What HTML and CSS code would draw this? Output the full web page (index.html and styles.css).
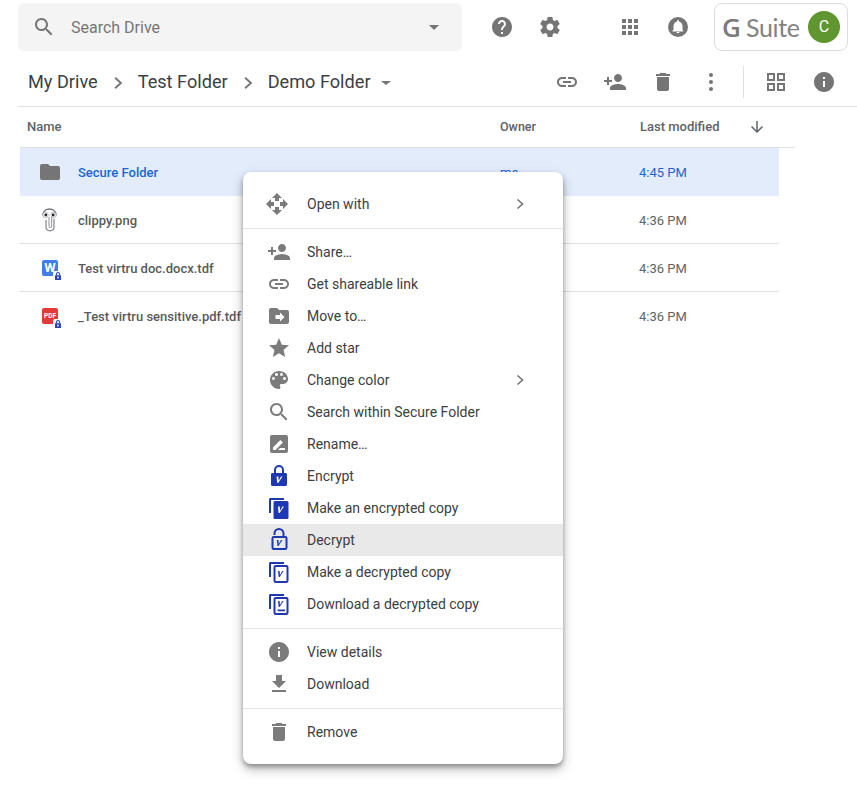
FILE: index.html
```html
<!DOCTYPE html>
<html lang="en">
<head>
<meta charset="utf-8">
<title>Drive</title>
<link rel="stylesheet" href="styles.css">
</head>
<body>
<svg class="defs" aria-hidden="true">
  <defs>
    <symbol id="i-search" viewBox="0 0 24 24"><path d="M15.5 14h-.79l-.28-.27C15.41 12.59 16 11.11 16 9.5 16 5.91 13.09 3 9.5 3S3 5.91 3 9.5 5.91 16 9.5 16c1.61 0 3.09-.59 4.23-1.57l.27.28v.79l5 4.99L20.49 19l-4.99-5zm-6 0C7.01 14 5 11.99 5 9.5S7.01 5 9.5 5 14 7.01 14 9.5 11.99 14 9.5 14z"/></symbol>
    <symbol id="i-link" viewBox="0 0 24 24"><path d="M3.9 12c0-1.71 1.39-3.1 3.1-3.1h4V7H7c-2.76 0-5 2.24-5 5s2.24 5 5 5h4v-1.9H7c-1.71 0-3.1-1.39-3.1-3.1zM8 13h8v-2H8v2zm9-6h-4v1.9h4c1.71 0 3.1 1.39 3.1 3.1s-1.39 3.1-3.1 3.1h-4V17h4c2.76 0 5-2.24 5-5s-2.24-5-5-5z"/></symbol>
    <symbol id="i-person" viewBox="0 0 24 24"><path d="M15 12c2.21 0 4-1.79 4-4s-1.79-4-4-4-4 1.79-4 4 1.79 4 4 4zm-9-2V7H4v3H1v2h3v3h2v-3h3v-2H6zm9 4c-2.67 0-8 1.34-8 4v2h16v-2c0-2.66-5.33-4-8-4z"/></symbol>
    <symbol id="i-trash" viewBox="0 0 24 24"><path d="M6 19c0 1.1.9 2 2 2h8c1.1 0 2-.9 2-2V7H6v12zM19 4h-3.5l-1-1h-5l-1 1H5v2h14V4z"/></symbol>
    <symbol id="i-info" viewBox="0 0 24 24"><path d="M12 2C6.48 2 2 6.48 2 12s4.48 10 10 10 10-4.48 10-10S17.52 2 12 2zm1 15h-2v-6h2v6zm0-8h-2V7h2v2z"/></symbol>
    <symbol id="i-folder" viewBox="0 0 24 24"><path d="M10 4H4c-1.1 0-1.99.9-1.99 2L2 18c0 1.1.9 2 2 2h16c1.1 0 2-.9 2-2V8c0-1.1-.9-2-2-2h-8l-2-2z"/></symbol>
    <symbol id="i-chev" viewBox="0 0 12 12"><path d="M3.500 1.500 8.500 6l-5 4.500" fill="none" stroke="currentColor" stroke-width="1.600"/></symbol>
    <symbol id="i-copy" viewBox="0 0 24 24"><path d="M2 17V3.500C2 2.700 2.700 2 3.500 2H17v2H4v13z"/></symbol>
    <symbol id="i-lockbadge" viewBox="0 0 10 10"><rect class="badge-bg" width="10" height="10" rx="2"/><path d="M3.500 4.500V3a1.500 1.500 0 0 1 3 0v1.500" fill="none" stroke="#2b45c0" stroke-width="1.100"/><path d="M2 4.300h6v4.700H2zM4.200 5.800v1.500h1.600V5.800z" fill="#2b45c0" fill-rule="evenodd"/></symbol>
  </defs>
</svg>

<header class="topbar">
  <div class="search">
    <svg class="icon search-icon"><use href="#i-search"/></svg>
    <span class="search-text">Search Drive</span>
    <span class="caret search-caret"></span>
  </div>
  <div class="icon-btn"><svg class="icon" viewBox="0 0 24 24"><path d="M12 2C6.48 2 2 6.48 2 12s4.48 10 10 10 10-4.48 10-10S17.52 2 12 2zm1 17h-2v-2h2v2zm2.07-7.75l-.9.92C13.45 12.9 13 13.5 13 15h-2v-.5c0-1.1.45-2.1 1.17-2.83l1.24-1.26c.37-.36.59-.86.59-1.41 0-1.1-.9-2-2-2s-2 .9-2 2H8c0-2.21 1.79-4 4-4s4 1.79 4 4c0 .88-.36 1.68-.93 2.25z"/></svg></div>
  <div class="icon-btn gap-right"><svg class="icon" viewBox="0 0 24 24"><path d="M19.43 12.98c.04-.32.07-.64.07-.98s-.03-.66-.07-.98l2.11-1.65c.19-.15.24-.42.12-.64l-2-3.46c-.12-.22-.39-.3-.61-.22l-2.49 1c-.52-.4-1.08-.73-1.69-.98l-.38-2.65C14.46 2.18 14.25 2 14 2h-4c-.25 0-.46.18-.49.42l-.38 2.65c-.61.25-1.17.59-1.69.98l-2.49-1c-.23-.09-.49 0-.61.22l-2 3.46c-.13.22-.07.49.12.64l2.11 1.65c-.04.32-.07.65-.07.98s.03.66.07.98l-2.11 1.65c-.19.15-.24.42-.12.64l2 3.46c.12.22.39.3.61.22l2.49-1c.52.4 1.08.73 1.69.98l.38 2.65c.03.24.24.42.49.42h4c.25 0 .46-.18.49-.42l.38-2.65c.61-.25 1.17-.59 1.69-.98l2.49 1c.23.09.49 0 .61-.22l2-3.46c.12-.22.07-.49-.12-.64l-2.11-1.65zM12 15.5c-1.93 0-3.5-1.57-3.5-3.5s1.57-3.5 3.5-3.5 3.5 1.57 3.5 3.5-1.57 3.5-3.5 3.5z"/></svg></div>
  <div class="icon-btn"><svg class="icon" viewBox="0 0 24 24"><path d="M4 4h4v4H4zM10 4h4v4h-4zM16 4h4v4h-4zM4 10h4v4H4zM10 10h4v4h-4zM16 10h4v4h-4zM4 16h4v4H4zM10 16h4v4h-4zM16 16h4v4h-4z"/></svg></div>
  <div class="icon-btn"><svg class="icon" viewBox="0 0 24 24"><circle cx="12" cy="12" r="10"/><path class="white" d="M12 18.300c.8 0 1.400-.6 1.400-1.300h-2.800c0 .7.6 1.300 1.400 1.300zm4.500-3.500v-3.600c0-2.200-1.200-4-3.300-4.500v-.4c0-.6-.5-1.100-1.200-1.100s-1.200.5-1.200 1.100v.4c-2.100.5-3.300 2.300-3.300 4.500v3.600l-1.200 1.100v.5h11v-.5z"/></svg></div>
  <div class="gsuite">
    <span class="g-mark">G</span><span class="g-suite">Suite</span>
    <span class="avatar">C</span>
  </div>
</header>

<nav class="toolbar">
  <span class="crumb">My Drive</span>
  <svg class="crumb-sep"><use href="#i-chev"/></svg>
  <span class="crumb">Test Folder</span>
  <svg class="crumb-sep"><use href="#i-chev"/></svg>
  <span class="crumb">Demo Folder</span>
  <span class="caret crumb-caret"></span>
  <div class="actions">
    <div class="icon-btn"><svg class="icon"><use href="#i-link"/></svg></div>
    <div class="icon-btn"><svg class="icon"><use href="#i-person"/></svg></div>
    <div class="icon-btn"><svg class="icon"><use href="#i-trash"/></svg></div>
    <div class="icon-btn"><svg class="icon" viewBox="0 0 24 24"><circle cx="12" cy="5" r="2"/><circle cx="12" cy="12" r="2"/><circle cx="12" cy="19" r="2"/></svg></div>
    <span class="vline"></span>
    <div class="icon-btn"><svg class="icon" viewBox="0 0 24 24"><path fill-rule="evenodd" d="M3 3h8v8H3zM5 5v4h4V5zM13 3h8v8h-8zM15 5v4h4V5zM3 13h8v8H3zM5 15v4h4v-4zM13 13h8v8h-8zM15 15v4h4v-4z"/></svg></div>
    <div class="icon-btn"><svg class="icon"><use href="#i-info"/></svg></div>
  </div>
</nav>

<main class="list">
  <div class="list-head">
    <span class="col-name">Name</span>
    <span class="col-owner">Owner</span>
    <span class="col-mod">Last modified</span>
    <svg class="sort-arrow" viewBox="0 0 24 24"><path d="M20 12l-1.410-1.410L13 16.170V4h-2v12.170l-5.580-5.590L4 12l8 8 8-8z"/></svg>
  </div>

  <div class="row selected">
    <svg class="file-icon folder"><use href="#i-folder"/></svg>
    <span class="row-name">Secure Folder</span>
    <span class="row-owner">me</span>
    <span class="row-mod">4:45 PM</span>
  </div>
  <div class="row">
    <svg class="file-icon clippy" viewBox="0 0 24 26">
      <path d="M8 13v7c0 5 8 5 8 0V12" fill="none" stroke="#8f8f96" stroke-width="1.300"/>
      <path d="M11 10v9c0 2 2.600 2 2.600 0V9" fill="none" stroke="#a4a4aa" stroke-width="1.200"/>
      <path d="M5.500 9C4 6 6.500 2 11.500 2s7.500 4 6 7" fill="none" stroke="#77777d" stroke-width="1.300"/>
      <circle cx="7.500" cy="8" r="2.700" fill="#fff" stroke="#a8a8ae" stroke-width=".8"/>
      <circle cx="15.500" cy="8" r="2.700" fill="#fff" stroke="#a8a8ae" stroke-width=".8"/>
      <circle cx="7.800" cy="8" r="1.400" fill="#222"/>
      <circle cx="15.200" cy="8" r="1.400" fill="#222"/>
    </svg>
    <span class="row-name">clippy.png</span>
    <span class="row-owner"></span>
    <span class="row-mod">4:36 PM</span>
  </div>
  <div class="row">
    <span class="file-icon doc word">W<svg class="badge"><use href="#i-lockbadge"/></svg></span>
    <span class="row-name">Test virtru doc.docx.tdf</span>
    <span class="row-owner"></span>
    <span class="row-mod">4:36 PM</span>
  </div>
  <div class="row">
    <span class="file-icon doc pdf">PDF<svg class="badge"><use href="#i-lockbadge"/></svg></span>
    <span class="row-name">_Test virtru sensitive.pdf.tdf</span>
    <span class="row-owner"></span>
    <span class="row-mod">4:36 PM</span>
  </div>
</main>

<div class="menu">
  <div class="item"><svg class="micon nudge" viewBox="0 0 24 24"><path d="M10 9h4V6h3l-5-5-5 5h3v3zm-1 1H6V7l-5 5 5 5v-3h3v-4zm14 2l-5-5v3h-3v4h3v3l5-5zm-9 3h-4v3H7l5 5 5-5h-3v-3z"/></svg><span class="label">Open with</span><svg class="more"><use href="#i-chev"/></svg></div>
  <hr class="sep">
  <div class="item"><svg class="micon"><use href="#i-person"/></svg><span class="label">Share…</span></div>
  <div class="item"><svg class="micon"><use href="#i-link"/></svg><span class="label">Get shareable link</span></div>
  <div class="item"><svg class="micon" viewBox="0 0 24 24"><path d="M10 4H4c-1.100 0-1.990.9-1.990 2L2 18c0 1.100.9 2 2 2h16c1.100 0 2-.9 2-2V8c0-1.100-.9-2-2-2h-8l-2-2z"/><path class="white" d="M13 8.500l4.500 4.500-4.500 4.500V15H8.500v-4H13z"/></svg><span class="label">Move to…</span></div>
  <div class="item"><svg class="micon" viewBox="0 0 24 24"><path d="M12 17.270L18.180 21l-1.640-7.030L22 9.240l-7.190-.61L12 2 9.190 8.630 2 9.240l5.460 4.730L5.820 21z"/></svg><span class="label">Add star</span></div>
  <div class="item"><svg class="micon" viewBox="0 0 24 24"><path d="M12 3c-4.970 0-9 4.030-9 9s4.030 9 9 9c.83 0 1.500-.67 1.500-1.500 0-.39-.15-.74-.39-1.010-.23-.26-.38-.61-.38-.99 0-.83.67-1.500 1.500-1.500H16c2.760 0 5-2.240 5-5 0-4.420-4.030-8-9-8zm-5.500 9c-.83 0-1.500-.67-1.500-1.500S5.670 9 6.500 9 8 9.670 8 10.500 7.330 12 6.500 12zm3-4C8.670 8 8 7.330 8 6.500S8.670 5 9.500 5s1.500.67 1.500 1.500S10.330 8 9.500 8zm5 0c-.83 0-1.500-.67-1.500-1.500S13.670 5 14.500 5s1.500.67 1.500 1.500S15.330 8 14.500 8zm3 4c-.83 0-1.500-.67-1.500-1.500S16.670 9 17.500 9s1.500.67 1.500 1.500-.67 1.500-1.500 1.500z"/></svg><span class="label">Change color</span><svg class="more"><use href="#i-chev"/></svg></div>
  <div class="item"><svg class="micon"><use href="#i-search"/></svg><span class="label">Search within Secure Folder</span></div>
  <div class="item"><svg class="micon" viewBox="0 0 24 24"><rect x="3" y="3" width="18" height="18" rx="2"/><path class="white" d="M6 18v-2.500l7.400-7.400 2.500 2.500L8.500 18zM11 18h7v-2H13z"/></svg><span class="label">Rename…</span></div>
  <div class="item v"><svg class="micon" viewBox="0 0 24 24"><path d="M4 10.500C4 9.400 4.900 9 5.500 9H7V6a5 5 0 0 1 10 0v3h1.500c.8 0 1.500.7 1.500 1.500v10c0 .8-.7 1.500-1.500 1.500h-13C4.700 22 4 21.300 4 20.500zM9 9h6V6a3 3 0 0 0-6 0z"/><path class="white" d="M9.600 12.500h1.700l.4 4.300 2.300-4.300h1.500L11.200 19h-1z"/></svg><span class="label">Encrypt</span></div>
  <div class="item v"><svg class="micon" viewBox="0 0 24 24"><use href="#i-copy"/><rect x="6.500" y="5" width="15" height="18" rx="1.500"/><path class="white" d="M11 10.500h1.700l.4 4.300 2.300-4.300h1.500L12.600 17h-1z"/></svg><span class="label">Make an encrypted copy</span></div>
  <div class="item v hover"><svg class="micon" viewBox="0 0 24 24"><path class="blue-stroke" d="M7.500 7V5.500a4.500 4.500 0 0 1 9 0V9"/><rect class="blue-stroke" x="5.500" y="9" width="14" height="12" rx="1.200"/><path d="M9.800 12h1.600l.4 4 2.200-4h1.400l-3.900 6h-1z"/></svg><span class="label">Decrypt</span></div>
  <div class="item v"><svg class="micon" viewBox="0 0 24 24"><use href="#i-copy"/><rect class="blue-stroke" x="7.500" y="6" width="13" height="16" rx="1.200"/><path d="M11 11h1.600l.4 4 2.200-4h1.400l-3.900 6h-1z"/></svg><span class="label">Make a decrypted copy</span></div>
  <div class="item v"><svg class="micon" viewBox="0 0 24 24"><use href="#i-copy"/><rect class="blue-stroke" x="7.500" y="6" width="13" height="16" rx="1.200"/><path d="M11 9h1.600l.4 4 2.200-4h1.400l-3.900 6h-1zM10.500 17.500h7.500v1.700h-7.500z"/></svg><span class="label">Download a decrypted copy</span></div>
  <hr class="sep">
  <div class="item"><svg class="micon"><use href="#i-info"/></svg><span class="label">View details</span></div>
  <div class="item"><svg class="micon" viewBox="0 0 24 24"><path d="M19 9h-4V3H9v6H5l7 7 7-7zM5 18v2h14v-2H5z"/></svg><span class="label">Download</span></div>
  <hr class="sep">
  <div class="item"><svg class="micon"><use href="#i-trash"/></svg><span class="label">Remove</span></div>
</div>
</body>
</html>
```

FILE: styles.css
```css
* { box-sizing: border-box; }
html, body { margin: 0; padding: 0; background: #fff; }
body {
  position: relative;
  width: 857px;
  height: 796px;
  overflow: hidden;
  font-family: Roboto, "Liberation Sans", sans-serif;
  color: #3c4043;
}
.defs { display: block; width: 0; height: 0; position: absolute; }
.white { fill: #fff; }

/* Top bar */
.topbar {
  display: flex;
  align-items: center;
  height: 51px;
  padding: 3px 0 0 18px;
}
.search {
  display: flex;
  align-items: center;
  width: 444px;
  height: 48px;
  margin-right: 16px;
  padding-left: 14px;
  background: #f4f4f4;
  border-radius: 5px;
}
.search-icon { fill: #6f6f6f; margin-right: 15px; }
.search-text { font-size: 16px; color: #767676; }
.search-caret { margin-left: auto; margin-right: 23px; }
.caret {
  width: 0;
  height: 0;
  border-left: 5px solid transparent;
  border-right: 5px solid transparent;
  border-top: 5px solid #757575;
}
.icon { width: 24px; height: 24px; fill: #757575; display: block; }
.icon-btn {
  width: 48px;
  height: 48px;
  display: flex;
  align-items: center;
  justify-content: center;
  flex: none;
}
.gap-right { margin-right: 32px; }
.gsuite {
  display: flex;
  align-items: center;
  width: 134px;
  height: 48px;
  margin-left: 12px;
  padding-left: 7px;
  border: 1px solid #dadce0;
  border-radius: 8px;
}
.g-mark { font: 600 26px "Open Sans", sans-serif; color: #7b7b7b; margin-right: 5px; }
.g-suite { font: 400 25px Lato, sans-serif; color: #828282; letter-spacing: -.3px; }
.avatar {
  width: 32px;
  height: 32px;
  margin-left: auto;
  margin-right: 7px;
  border-radius: 50%;
  background: #5f962f;
  color: #fff;
  font-size: 16px;
  line-height: 32px;
  text-align: center;
}

/* Breadcrumbs + actions */
.toolbar {
  display: flex;
  align-items: center;
  height: 56px;
  margin-left: 18px;
  padding-left: 10px;
  padding-top: 6px;
  border-bottom: 1px solid #e0e0e0;
}
.crumb { font-size: 18.150px; color: #3c4043; white-space: nowrap; }
.crumb-sep { width: 14px; height: 14px; margin: 2px 13px 0; color: #757575; flex: none; }
.crumb-caret { margin-left: 10px; margin-top: 2px; border-top-width: 4px; }
.actions { display: flex; align-items: center; margin-left: auto; padding-right: 9px; }
.vline { width: 1px; height: 32px; margin: 0 8px; background: #e0e0e0; }

/* List */
.list-head {
  display: grid;
  grid-template-columns: 473px 140px 108px 24px;
  align-items: center;
  width: 775px;
  height: 41px;
  margin-left: 20px;
  padding: 0 0 1px 7px;
  border-bottom: 1px solid #e0e0e0;
  font-size: 13px;
  font-weight: 500;
  color: #5f6368;
}
.col-owner { font-size: 12.500px; }
.sort-arrow { width: 18px; height: 18px; fill: #5f6368; margin-top: 1px; }
.row {
  display: grid;
  grid-template-columns: 20px 440px 139px 1fr;
  align-items: center;
  width: 759px;
  height: 48px;
  margin-left: 20px;
  padding-left: 20px;
  border-bottom: 1px solid #e0e0e0;
  font-size: 13px;
  color: #5f6368;
}
.row:last-child { border-bottom-color: transparent; }
.row.selected { background: #e3ecfb; border-bottom-color: transparent; color: #1a66d2; }
.row > span { position: relative; top: 1px; }
.row-name { padding-left: 18px; font-weight: 500; color: #5a5a5a; white-space: nowrap; }
.selected .row-name { color: #1a66d2; }
.file-icon { display: block; flex: none; }
.folder { width: 24px; height: 24px; margin-left: -2px; fill: #757575; }
.clippy { width: 24px; height: 26px; margin-left: -2px; }
.row > .doc {
  position: relative;
  top: 0;
  width: 16px;
  height: 16px;
  margin-left: 2px;
  border-radius: 2px;
  color: #fff;
  text-align: center;
  font-weight: 700;
}
.word { background: #3f7ee8; font-size: 13px; line-height: 16px; }
.pdf { background: #e53935; font-size: 6.500px; line-height: 16px; }
.badge { position: absolute; right: -5px; bottom: -5px; width: 10px; height: 10px; display: block; }
.badge-bg { fill: #fff; }

/* Context menu */
.menu {
  position: absolute;
  left: 243px;
  top: 172px;
  width: 320px;
  height: 592px;
  padding: 16px 0;
  background: #fff;
  border-radius: 8px;
  box-shadow: 0 3px 4px rgba(0, 0, 0, .28), 0 5px 12px rgba(0, 0, 0, .28);
}
.item {
  display: flex;
  align-items: center;
  height: 32px;
  padding-left: 24px;
  font-size: 14px;
  color: #3c4043;
}
.item.hover { background: #e9e9e9; }
.micon { width: 24px; height: 24px; margin-right: 16px; fill: #7b7b7b; flex: none; }
.nudge { margin-left: -2px; margin-right: 18px; }
.v .micon { fill: #1e38b4; }
.blue-stroke { fill: none; stroke: #1e38b4; stroke-width: 2; }
.label { white-space: nowrap; }
.more { width: 12px; height: 12px; margin-left: auto; margin-right: 37px; color: #757575; }
.sep {
  height: 1px;
  margin: 7.500px 0;
  border: 0;
  background: #e4e4e4;
}
```
